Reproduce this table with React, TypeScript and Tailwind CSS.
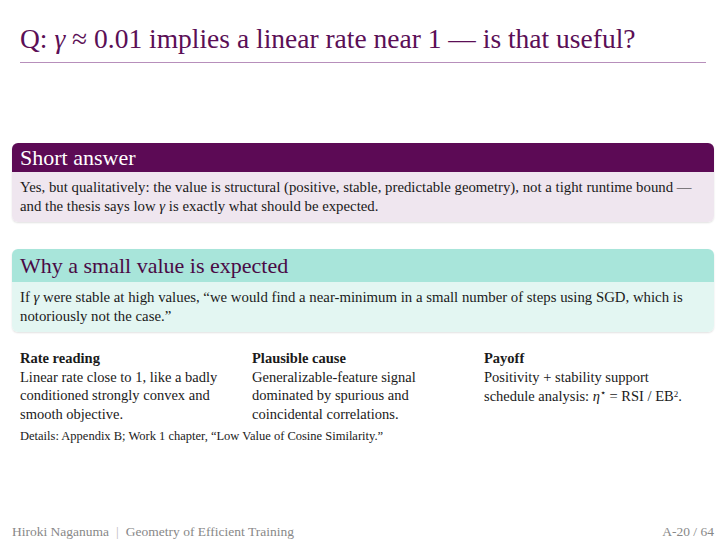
import React from "react";

const serif = { fontFamily: '"Liberation Serif", "DejaVu Serif", serif' };

const Gamma = () => <span className="italic">γ</span>;

type BoxProps = {
  title: string;
  head: string;
  body: string;
  titleColor: string;
  children: React.ReactNode;
  className?: string;
};

const Block: React.FC<BoxProps> = ({ title, head, body, titleColor, children, className }) => (
  <div className={`mx-[12px] rounded-[6px] overflow-hidden shadow-[0_1px_2px_rgba(0,0,0,0.12)] ${className ?? ""}`}>
    <div className={`${head} ${titleColor} px-[8px] flex items-center text-[22px] leading-none`}>
      {title}
    </div>
    <div className={`${body} px-[8px] pt-[6px] pb-[6px] text-[14.8px] leading-[19px] text-[#1a1a1a] whitespace-nowrap`}>
      {children}
    </div>
  </div>
);

const columns = [
  {
    head: "Rate reading",
    lines: ["Linear rate close to 1, like a badly", "conditioned strongly convex and", "smooth objective."],
  },
  {
    head: "Plausible cause",
    lines: ["Generalizable-feature signal", "dominated by spurious and", "coincidental correlations."],
  },
];

export default function App() {
  return (
    <div className="w-[726px] h-[544px] bg-white flex flex-col text-[#1a1a1a]" style={serif}>
      <div className="px-[20px] pt-[22px]">
        <h1 className="text-[27.5px] leading-[34px] text-[#5b0f56] pb-[6px] border-b border-[#b78fbb]">
          Q: <Gamma /> ≈ 0.01 implies a linear rate near 1 — is that useful?
        </h1>
      </div>

      <Block
        title="Short answer"
        head="bg-[#5c0a55] h-[29px]"
        titleColor="text-white"
        body="bg-[#efe6ef]"
        className="mt-[80px]"
      >
        Yes, but qualitatively: the value is structural (positive, stable, predictable geometry), not a tight runtime bound —
        <br />
        and the thesis says low <Gamma /> is exactly what should be expected.
      </Block>

      <Block
        title="Why a small value is expected"
        head="bg-[#a8e5da] h-[33px]"
        titleColor="text-[#4a0a45]"
        body="bg-[#e3f6f2]"
        className="mt-[27px]"
      >
        If <Gamma /> were stable at high values, “we would find a near-minimum in a small number of steps using SGD, which is
        <br />
        notoriously not the case.”
      </Block>

      <div className="px-[20px] mt-[17px]">
        <div className="grid grid-cols-3 gap-x-[10px] text-[14.5px] leading-[18.5px]">
          {columns.map((c) => (
            <div key={c.head}>
              <div className="font-bold">{c.head}</div>
              {c.lines.map((l) => (
                <div key={l}>{l}</div>
              ))}
            </div>
          ))}
          <div>
            <div className="font-bold">Payoff</div>
            <div>Positivity + stability support</div>
            <div className="mt-[1px]">
              schedule analysis: <span className="italic">η</span>
              <sup className="text-[10px]">⋆</sup> = RSI / EB<sup className="text-[9px]">2</sup>.
            </div>
          </div>
        </div>
        <div className="text-[12.5px] leading-[16px] mt-[5px]">
          Details: Appendix B; Work 1 chapter, “Low Value of Cosine Similarity.”
        </div>
      </div>

      <div className="mt-auto px-[12px] pb-[2px] flex items-center text-[13.5px] text-[#888888]">
        <span>Hiroki Naganuma</span>
        <span className="mx-[7px] text-[#bbbbbb]">|</span>
        <span>Geometry of Efficient Training</span>
        <span className="ml-auto">A-20 / 64</span>
      </div>
    </div>
  );
}
